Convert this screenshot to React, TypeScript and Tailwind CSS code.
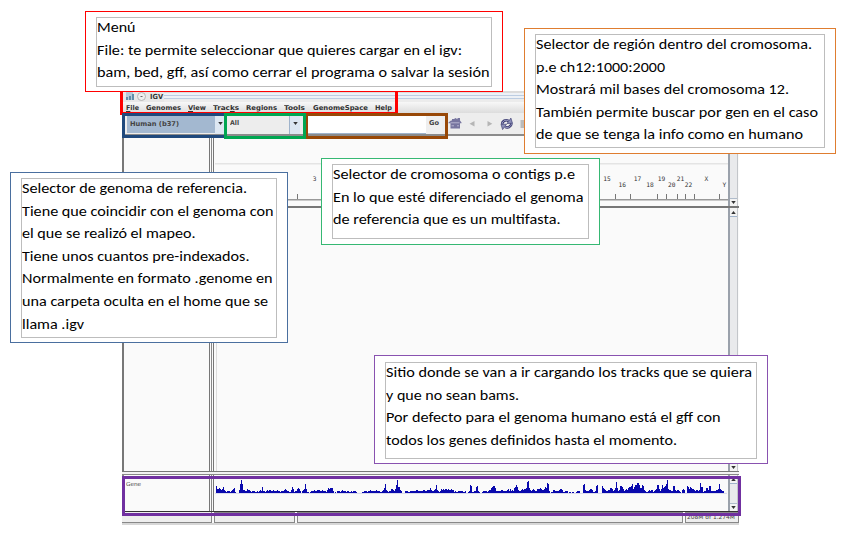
import { useLayoutEffect, useRef } from "react";
import type { ReactNode } from "react";

/* Single line of text condensed or widened horizontally to a given width. */
function Fit({ w, children, className = "" }: { w: number; children: ReactNode; className?: string }) {
  const ref = useRef<HTMLSpanElement>(null);
  useLayoutEffect(() => {
    const el = ref.current;
    if (!el) return;
    el.style.transform = "none";
    el.style.transform = `scaleX(${w / el.getBoundingClientRect().width})`;
  }, [w]);
  return (
    <span className={`block shrink-0 whitespace-nowrap ${className}`} style={{ width: w }}>
      <span ref={ref} className="inline-block origin-left">{children}</span>
    </span>
  );
}

type Line = [string, number];

function Callout({ place, inner, lines }: { place: string; inner: string; lines: Line[] }) {
  return (
    <div className={`absolute bg-white ${place}`}>
      <div className={`border border-[#bdbdbd] ${inner}`}>
        <div className="-mt-[2px] font-['Carlito','Lato',sans-serif] text-[15.2px] leading-[22.6px] text-black">
          {lines.map(([t, w]) => (
            <Fit key={t} w={w}>{t}</Fit>
          ))}
        </div>
      </div>
    </div>
  );
}

const menus: [string, string, string, number, string][] = [
  ["", "F", "ile", 13, "ml-[4px]"],
  ["Genomes", "", "", 35, "ml-[7px]"],
  ["", "V", "iew", 18, "ml-[7px]"],
  ["Trac", "k", "s", 26, "ml-[7px]"],
  ["Regions", "", "", 31, "ml-[7px]"],
  ["Tools", "", "", 21, "ml-[7px]"],
  ["GenomeSpace", "", "", 55, "ml-[8px]"],
  ["Help", "", "", 17, "ml-[7px]"],
];

function Arrow({ up = false, className = "" }: { up?: boolean; className?: string }) {
  return (
    <svg viewBox="0 0 6 4" className={`h-[3px] w-[5px] ${className}`}>
      <path d={up ? "M0 4h6L3 0z" : "M0 0h6L3 4z"} fill="#333" />
    </svg>
  );
}

function ScrollBar({ className = "", top = true }: { className?: string; top?: boolean }) {
  return (
    <div className={`flex w-[10px] shrink-0 flex-col items-center border-l-2 border-r border-l-[#9aa1ab] border-r-[#c3c6ca] bg-[#e9eaec] ${className}`}>
      {top && (
        <div className="flex h-[9px] w-full items-center justify-center border-b border-[#9fb3cb] bg-[#f3f3f3]">
          <Arrow up />
        </div>
      )}
      <div className="flex-1" />
      <div className="flex h-[8px] w-full items-center justify-center border-t border-[#b0bccb] bg-[#f3f3f3]">
        <Arrow />
      </div>
    </div>
  );
}

const ticks = [297, 615, 630, 657, 666, 677, 685, 694, 719];
const labels: [string, number, number][] = [
  ["3", 314.5, 181], ["15", 607, 181], ["16", 622.3, 187], ["17", 637.5, 181], ["18", 650, 187],
  ["19", 661.5, 181], ["20", 671.7, 187], ["21", 680.5, 181], ["22", 688.6, 187], ["X", 706.3, 181], ["Y", 724.3, 187],
];

function Ruler() {
  return (
    <svg viewBox="215 136 513 66" className="h-[66px] w-[513px]">
      <path d="M215 163.7h513" stroke="#e4e4e4" strokeWidth="1.6" />
      {ticks.map((x) => (
        <path key={x} d={`M${x + 0.5} 194v5`} stroke="#777" />
      ))}
      <path d="M215 199.7h513" stroke="#999" strokeWidth="1.4" />
      {labels.map(([t, x, y]) => (
        <text key={t} x={x} y={y} textAnchor="middle" fontSize="6.2" fill="#333" fontFamily="DejaVu Sans Mono">{t}</text>
      ))}
    </svg>
  );
}

/* Gene density: start column and one hex digit per pixel column. */
const density: [number, string][] = [
  [216, "7445434632122212"], [232, "3451"], [237, "0012"], [239, "39d9332"], [246, "2433212221"], [256, "121232622123"],
  [268, "2332232223221210"], [281, "1223432211"], [291, "3641224542"], [302, "23494110"], [310, "1222322"],
  [317, "3332232221354555"], [333, "2010222123222122"], [349, "1121222100"], [362, "11222122"], [370, "3222223222"],
  [380, "11235932"], [388, "1224432"], [395, "48d6632"], [405, "2221122"], [412, "2222332222"], [422, "2332233353"],
  [432, "22348321"], [440, "24343443"], [448, "4334331211"], [458, "22222112"], [468, "12871"],
  [473, "1226721"], [482, "12222123"], [490, "356775222"], [499, "2233222"], [506, "234242325"], [515, "686322"],
  [521, "343445bc53"], [531, "234322444543346"], [546, "5a92"], [551, "1133222234"], [561, "431"], [564, "1222011011"],
  [576, "12220001"], [583, "89322"], [588, "2344311222"], [596, "78"], [602, "754322"], [608, "33554235b5"],
  [618, "23776423"], [626, "43566794"], [634, "688aa855"], [642, "87321123"], [650, "233123488"], [659, "42485679"],
  [667, "d4332277"], [675, "323321"], [682, "343"], [687, "76465443"], [695, "23323a66"], [703, "122553"],
  [709, "7722222334"], [719, "94322"],
];

function GeneTrack() {
  const d = density
    .flatMap(([x0, row]) =>
      row.split("").map((c, i) => (c === "0" ? "" : `M${x0 + i - 214.5} 17v${-parseInt(c, 16)}`)),
    )
    .join("");
  return (
    <svg viewBox="0 0 512 20" className="h-[20px] w-[512px]">
      <path d="M0 17.4h512" stroke="#d7d7ea" />
      <path d={d} stroke="#0909ad" strokeWidth="1" />
    </svg>
  );
}

function IgvWindow() {
  return (
    <div className="ml-[122px] flex h-[434px] w-[617px] flex-col bg-[#d7d7d7] font-['DejaVu_Sans',sans-serif]">
      <div className="flex h-[11px] items-center bg-[linear-gradient(#dcdcdc_0_2px,#edf1f6_2px_4px,#bccde2_4px_5px,#edf1f6_5px_7px,#bccde2_7px_8px,#ececec_8px)]">
        <div className="flex h-full w-[42px] items-center bg-[#e8e8e8]">
          <svg viewBox="0 0 24 10" className="ml-[3px] h-[10px] w-[24px]">
            <path d="M1 0h7v8H1z" fill="#b5cbd9" />
            <path d="M1 5h2v3H1zM4 4h2v4H4zM7 2h2v6H7z" fill="#608da9" />
            <circle cx="16.5" cy="4.5" r="4" fill="#eee" stroke="#aaa" strokeWidth=".8" />
            <path d="M15.5 4.5h2" stroke="#666" />
          </svg>
          <Fit w={13} className="ml-[1px] text-[7px] font-bold leading-[10px] text-[#333]">IGV</Fit>
        </div>
      </div>
      <div className="flex h-[11px] items-center bg-[linear-gradient(#f8f8f8,#dcdcdc)] text-[6.7px] font-bold leading-[10px] text-[#333]">
        {menus.map(([a, u, b, w, m]) => (
          <Fit key={a + b} w={w} className={m}>{a}<span className="underline">{u}</span>{b}</Fit>
        ))}
      </div>
      <div className="flex h-[23px] items-stretch border-b-2 border-[#8b8b8b] bg-[#ededed] text-[6.7px] font-bold text-[#444]">
        <div className="mb-px ml-[5px] mt-[3px] flex w-[88px] items-center bg-[#a3b8d0]">
          <Fit w={49} className="ml-[3px]">Human (b37)</Fit>
        </div>
        <div className="flex w-[10px] items-center justify-center bg-[#dde7f2]"><Arrow /></div>
        <div className="ml-[3px] flex w-[61px] items-center">
          <Fit w={9} className="ml-[2px]">All</Fit>
        </div>
        <div className="flex w-[11px] items-center justify-center border-l border-[#9fb3cb] bg-[#dbe6f2]"><Arrow /></div>
        <div className="ml-[6px] mt-[2px] w-[121px] border-b border-r border-[#9fb3cb] bg-white" />
        <div className="-ml-px flex w-[16px] items-center justify-center bg-[#efefef]"><Fit w={10}>Go</Fit></div>
        <svg viewBox="443 113 90 21" className="ml-px h-[21px] w-[90px]">
          <path d="M448.500 122.500l2.500-2h1v-1.500h2l1.500-1 2 1.200v-1.200h2.500v2.500l1.500 2v.8h-1.500v5.200h-9.500v-5.200h-2z" fill="#77759f" />
          <path d="M450.500 122.800h9M451.500 125.800h2.500M457 125.800h2" stroke="#c5c3da" strokeWidth=".8" />
          <path d="M474.500 121v5.500l-5-2.700zM487.500 121v5.500l4.800-2.700z" fill="#b5b5b5" />
          <path d="M502 124.300c.3-3.300 3.500-5 6.500-3.500M511.500 123.400c-.3 3.300-3.500 5-6.500 3.500" fill="none" stroke="#33336a" strokeWidth="2.600" />
          <path d="M502 124.300c.3-3.300 3.500-5 6.500-3.500M511.500 123.400c-.3 3.300-3.500 5-6.500 3.500" fill="none" stroke="#b4b7dc" strokeWidth=".9" />
          <path d="M507 123.500l5.500-.2-1.600-5.200zM506.500 124.200l-5.500.2 1.600 5.200z" fill="#8b8eb8" stroke="#33336a" strokeWidth=".6" />
          <path d="M520.500 120h4v8h-4z" fill="#bbb" />
        </svg>
      </div>
      <div className="flex h-[70px] border-l-2 border-[#777] bg-[#fafafa]">
        <div className="w-[85px] shrink-0" />
        <div className="w-[5px] shrink-0 border-x border-[#777] bg-[linear-gradient(90deg,#fafafa_1px,#888_1px_2px,#fafafa_2px)]" />
        <div className="w-px shrink-0" />
        <Ruler />
        <ScrollBar top={false} className="h-[70px]" />
      </div>
      <div className="h-[2px] shrink-0 bg-[#777]" />
      <div className="flex h-[264px] border-b border-l-2 border-[#777] bg-[#fafafa]">
        <div className="w-[85px] shrink-0" />
        <div className="w-[5px] shrink-0 border-x border-[#777] bg-[linear-gradient(90deg,#fafafa_1px,#888_1px_2px,#fafafa_2px)]" />
        <div className="ml-[2px] w-[512px] shrink-0 border-l border-[#ddd]" />
        <ScrollBar />
      </div>
      <div className="h-[2px] shrink-0 bg-[#f3f3f3]" />
      <div className="flex h-[38px] border-b border-l-2 border-t border-b-[#333] border-l-[#888] border-t-[#888] bg-[#fafafa]">
        <Fit w={15} className="ml-[2px] mt-[5px] text-[5.5px] leading-[8px] text-[#444]">Gene</Fit>
        <div className="ml-[68px] w-[5px] shrink-0 border-x border-[#777] bg-[linear-gradient(90deg,#fafafa_1px,#888_1px_2px,#fafafa_2px)]" />
        <div className="ml-[1px] w-[512px] shrink-0 pt-[1px]"><GeneTrack /></div>
        <ScrollBar className="ml-px" />
      </div>
      <div className="flex h-[11px] gap-[2px] bg-[#fafafa] text-[6px]">
        <div className="w-[90px] border-b border-r border-[#888] bg-[#eee]" />
        <div className="w-[81px] border border-[#888] bg-[#eee]" />
        <div className="w-[386px] border border-[#888] bg-[#eee]" />
        <div className="flex w-[54px] items-end overflow-hidden border border-[#888] bg-[#eee]">
          <Fit w={48} className="ml-px leading-[10px] text-[#444]">208M of 1.274M</Fit>
        </div>
      </div>
      <div className="h-[2px] shrink-0" />
    </div>
  );
}

export default function App() {
  return (
    <div className="relative h-[540px] w-[848px] overflow-hidden bg-white pt-[91px]">
      <IgvWindow />

      <div className="absolute left-[120px] top-[80px] h-[35px] w-[278px] border-[3px] border-[#f00]" />
      <div className="absolute left-[122px] top-[113px] h-[25px] w-[105px] border-[3px] border-[#1f497d]" />
      <div className="absolute left-[305px] top-[113px] h-[26px] w-[143px] border-[3px] border-[#984807]" />
      <div className="absolute left-[224px] top-[113px] h-[26px] w-[82px] border-[3px] border-[#00a651]" />
      <div className="absolute left-[122px] top-[476px] h-[40px] w-[619px] border-[3px] border-[#7030a0]" />

      <Callout
        place="left-[85px] top-[11px] h-[81px] w-[418px] border border-[#f00]"
        inner="ml-[10px] mt-[5px] h-[70px] w-[396px]"
        lines={[["Menú", 38.5], ["File: te permite seleccionar que quieres cargar en el igv:", 365], ["bam, bed, gff, así como cerrar el programa o salvar la sesión", 392.5]]}
      />
      <Callout
        place="left-[524px] top-[28px] h-[126px] w-[312px] border border-[#df7d30]"
        inner="ml-[10px] mt-[5px] h-[114px] w-[290px]"
        lines={[["Selector de región dentro del cromosoma.", 276], ["p.e ch12:1000:2000", 129], ["Mostrará mil bases del cromosoma 12.", 253], ["También permite buscar por gen en el caso", 282], ["de que se tenga la info como en humano", 267]]}
      />
      <Callout
        place="left-[10px] top-[172px] h-[171px] w-[278px] border border-[#4a6f9f]"
        inner="ml-[10px] mt-[5px] h-[160px] w-[256px]"
        lines={[["Selector de genoma de referencia.", 225], ["Tiene que coincidir con el genoma con", 251.5], ["el que se realizó el mapeo.", 173.5], ["Tiene unos cuantos pre-indexados.", 227.5], ["Normalmente en formato .genome en", 250.5], ["una carpeta oculta en el home que se", 246], ["llama .igv", 62]]}
      />
      <Callout
        place="left-[321px] top-[158px] h-[87px] w-[279px] border border-[#36b873]"
        inner="ml-[10px] mt-[5px] h-[75px] w-[257px]"
        lines={[["Selector de cromosoma o contigs p.e", 242], ["En lo que esté diferenciado el genoma", 250.5], ["de referencia que es un multifasta.", 227.5]]}
      />
      <Callout
        place="left-[374px] top-[355px] h-[109px] w-[394px] border border-[#8952b0]"
        inner="ml-[10px] mt-[6px] h-[97px] w-[372px]"
        lines={[["Sitio donde se van a ir cargando los tracks que se quiera", 366], ["y que no sean bams.", 133], ["Por defecto para el genoma humano está el gff con", 334.5], ["todos los genes definidos hasta el momento.", 291]]}
      />
    </div>
  );
}
